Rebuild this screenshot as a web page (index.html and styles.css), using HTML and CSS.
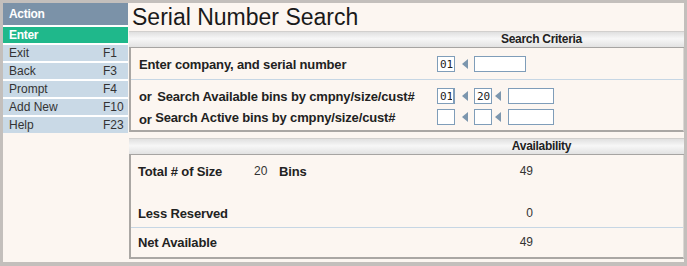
FILE: index.html
```html
<!DOCTYPE html>
<html lang="en">
<head>
    <meta charset="UTF-8">
    <meta name="viewport" content="width=device-width, initial-scale=1.0">
    <title>Serial Number Search</title>
    <link rel="stylesheet" href="styles.css">
</head>
<body>
    <div class="frame">
        <div class="sidebar">
            <div class="side-head">Action</div>
            <div class="side-item active">Enter</div>
            <div class="side-item"><span>Exit</span><span>F1</span></div>
            <div class="side-item"><span>Back</span><span>F3</span></div>
            <div class="side-item"><span>Prompt</span><span>F4</span></div>
            <div class="side-item"><span>Add New</span><span>F10</span></div>
            <div class="side-item"><span>Help</span><span>F23</span></div>
        </div>

        <div class="main">
            <h1 class="title">Serial Number Search</h1>

            <div class="panel">
                <div class="panel-head">Search Criteria</div>
                <div class="panel-body">
                    <div class="crit-row first">
                        <div class="label">Enter company, and serial number</div>
                        <div class="controls">
                            <input class="fld small" type="text" value="01">
                            <span class="arrow"></span>
                            <input class="fld wide" type="text" value="">
                        </div>
                    </div>
                    <div class="crit-group">
                        <div class="crit-row">
                            <div class="label"><span class="or">or</span> <span class="ind">Search Available bins by cmpny/size/cust#</span></div>
                            <div class="controls">
                                <input class="fld small caret" type="text" value="01">
                                <span class="arrow"></span>
                                <input class="fld small" type="text" value="20">
                                <span class="arrow tight"></span>
                                <input class="fld mid" type="text" value="">
                            </div>
                        </div>
                        <div class="crit-row">
                            <div class="label"><span class="or low">or</span> Search Active bins by cmpny/size/cust#</div>
                            <div class="controls">
                                <input class="fld small" type="text" value="">
                                <span class="arrow"></span>
                                <input class="fld small" type="text" value="">
                                <span class="arrow tight"></span>
                                <input class="fld mid" type="text" value="">
                            </div>
                        </div>
                    </div>
                </div>
            </div>

            <div class="panel second">
                <div class="panel-head">Availability</div>
                <div class="panel-body avail">
                    <div class="avail-row total">
                        <div class="label">Total # of Size</div>
                        <div class="num qty">20</div>
                        <div class="label">Bins</div>
                        <div class="num val">49</div>
                    </div>
                    <div class="avail-row reserved">
                        <div class="label">Less Reserved</div>
                        <div></div>
                        <div></div>
                        <div class="num val">0</div>
                    </div>
                    <div class="avail-row net">
                        <div class="label">Net Available</div>
                        <div></div>
                        <div></div>
                        <div class="num val">49</div>
                    </div>
                </div>
            </div>
        </div>
    </div>
</body>
</html>
```

FILE: styles.css
```css
body {
    margin: 0;
    font-family: "Liberation Sans", Arial, sans-serif;
    color: #222;
}
.frame {
    width: 687px;
    height: 266px;
    box-sizing: border-box;
    border: 3px solid #c3bfbc;
    border-bottom-width: 4px;
    background: #fcf6f1;
    display: flex;
}
.sidebar {
    width: 125px;
    flex: none;
}
.side-head {
    height: 22px;
    line-height: 22px;
    background: #7b92a8;
    color: #fff;
    font-weight: bold;
    font-size: 12px;
    letter-spacing: -0.3px;
    padding-left: 6px;
}
.side-item {
    height: 16px;
    line-height: 16px;
    border-top: 2px solid #fff;
    background: #c9d9e6;
    color: #333;
    font-size: 12px;
    padding-left: 6px;
    display: grid;
    grid-template-columns: 94px 1fr;
}
.side-item.active {
    background: #1fb88b;
    color: #fff;
    font-weight: bold;
    letter-spacing: -0.3px;
    display: block;
}
.main {
    flex: 1;
    padding-left: 1px;
    min-width: 0;
}
.title {
    margin: 0;
    height: 28px;
    line-height: 28px;
    font-size: 23px;
    font-weight: normal;
    padding-left: 3px;
    color: #1a1a1a;
}
.panel-head {
    height: 15px;
    line-height: 15px;
    border-top: 1px solid #d2d0ce;
    border-bottom: 1px solid #a6a4a2;
    background: linear-gradient(#e0e0e0, #f7f7f7 45%, #e2e2e2);
    text-align: center;
    font-size: 12px;
    font-weight: bold;
    letter-spacing: -0.3px;
    padding-left: 270px;
}
.panel-body {
    border-left: 2px solid #aaa7a4;
    border-bottom: 2px solid #aaa7a4;
    border-right: 1px solid #dcd8d4;
}
.label {
    font-size: 13px;
    font-weight: bold;
    letter-spacing: -0.15px;
    white-space: nowrap;
}
.crit-row {
    display: grid;
    grid-template-columns: 298px 1fr;
    align-items: center;
    padding-left: 8px;
    height: 16px;
}
.crit-row.first {
    height: 30px;
    padding-top: 1px;
    border-bottom: 1px solid #c6d6e4;
}
.crit-group {
    padding: 8px 0 5px;
    display: flex;
    flex-direction: column;
    gap: 5px;
}
.or {
    margin-right: 2px;
}
.or.low {
    position: relative;
    top: 2px;
    margin-right: 0;
}
.controls {
    display: flex;
    align-items: center;
}
.fld {
    box-sizing: border-box;
    height: 16px;
    border: 1px solid #7f9db9;
    background: #fff;
    font-family: "DejaVu Sans Mono", monospace;
    font-size: 11px;
    padding: 0 1px 0 2px;
    margin: 0;
    color: #222;
}
.fld.caret {
    border-right: 2px solid #7f9db9;
}
.fld.small {
    width: 18px;
}
.fld.wide {
    width: 52px;
}
.fld.mid {
    width: 46px;
}
.arrow {
    width: 0;
    height: 0;
    border-top: 5px solid transparent;
    border-bottom: 5px solid transparent;
    border-right: 6px solid #7c96ae;
    margin: 0 6px 0 7px;
}
.arrow.tight {
    margin: 0 7px 0 3px;
}
.panel.second {
    margin-top: 6px;
}
.avail {
    padding-left: 7px;
    height: 104px;
    box-sizing: border-box;
}
.avail-row {
    display: grid;
    grid-template-columns: 116px 25px 214px 40px;
    align-items: center;
    height: 16px;
}
.avail-row.total {
    padding-top: 8px;
}
.avail-row.reserved {
    margin-top: 26px;
    padding-bottom: 6px;
    border-bottom: 1px solid #c6d6e4;
    margin-left: -7px;
    padding-left: 7px;
}
.avail-row.net {
    margin-top: 6px;
}
.num {
    font-size: 12px;
    color: #333;
}
.num.val {
    text-align: right;
}
```
